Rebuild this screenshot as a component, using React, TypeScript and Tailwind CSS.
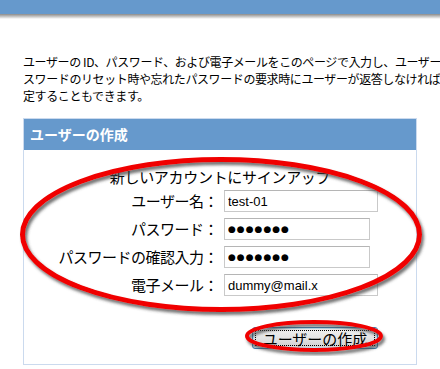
import React from "react";

// 日本語は Noto Sans CJK JP、入力欄の英数字は Arial 幅の Liberation Sans
const JP = "font-['Noto_Sans_CJK_JP',sans-serif]";
const LATIN = "font-['Liberation_Sans','Noto_Sans_CJK_JP',sans-serif]";

const rows = [
  { label: "ユーザー名：", value: "test-01", w: "w-[154px]" },
  { label: "パスワード：", value: "●●●●●●●", w: "w-[146px]", secret: true },
  { label: "パスワードの確認入力：", value: "●●●●●●●", w: "w-[146px]", secret: true },
  { label: "電子メール：", value: "dummy@mail.x", w: "w-[154px]" },
];

function Field({ value, w, secret }: { value: string; w: string; secret?: boolean }) {
  return (
    <input
      readOnly
      value={value}
      className={`block ${w} h-[22px] border border-[#c9c9c9] border-t-[#b5b5b5] bg-white px-[3px] text-black outline-none ${
        secret ? "font-['DejaVu_Sans',sans-serif] text-[9px] tracking-[1px]" : `${LATIN} text-[13px]`
      }`}
    />
  );
}

export default function App() {
  return (
    <div className={`relative h-[369px] w-[440px] overflow-hidden bg-white text-black ${JP}`}>
      <div className="h-[14px] bg-[#6699cc]" />
      <div className="h-[5px] bg-gradient-to-b from-[#8c8c8c] to-white" />

      <div className="ml-[23px] mt-[34px] whitespace-nowrap text-[12px] leading-[17px] tracking-[-0.4px]">
        <div>ユーザーの ID、パスワード、および電子メールをこのページで入力し、ユーザーを追加します。パ</div>
        <div>スワードのリセット時や忘れたパスワードの要求時にユーザーが返答しなければならない秘密の質問と答えを設</div>
        <div>定することもできます。</div>
      </div>

      <div className="ml-[23px] mt-[14px] w-[394px] border border-[#cbdaee]">
        <div className="flex h-[31px] items-center bg-[#6699cc] px-[6px] text-[14px] font-bold text-white">
          ユーザーの作成
        </div>
        <div className="pb-[15px] pt-[17px]">
          <div className="text-center text-[15px] leading-[19px] tracking-[-0.3px]">新しいアカウントにサインアップ</div>
          <div className="mt-[4px] grid grid-cols-[194px_auto] items-center gap-x-[6px] gap-y-[6px]">
            {rows.map((r) => (
              <React.Fragment key={r.label}>
                <div className="whitespace-nowrap text-right text-[15px] leading-[22px] tracking-[-0.5px]">
                  {r.label}
                </div>
                <Field value={r.value} w={r.w} secret={r.secret} />
              </React.Fragment>
            ))}
          </div>
          <div className="mt-[31px] flex justify-end pr-[38px]">
            <button className="h-[22px] w-[126px] rounded-[3px] border border-[#3c7fb1] bg-gradient-to-b from-[#f2f2f2] via-[#e4e4e4] to-[#cfcfcf] p-[2px] shadow-[inset_0_0_0_1px_#bfe6f5]">
              <span className="flex h-full items-center justify-center border border-dotted border-black text-[15px] leading-none">
                ユーザーの作成
              </span>
            </button>
          </div>
        </div>
      </div>

      <svg className="pointer-events-none absolute left-0 top-0" width="440" height="369">
        <defs>
          <filter id="sh" x="-10%" y="-20%" width="120%" height="140%">
            <feDropShadow dx="2" dy="3" stdDeviation="1.5" floodColor="#444" floodOpacity="0.75" />
          </filter>
        </defs>
        <ellipse cx="221" cy="234.5" rx="198.5" ry="75" fill="none" stroke="#f00000" strokeWidth="5" filter="url(#sh)" />
        <ellipse cx="314" cy="336" rx="67" ry="14" fill="none" stroke="#f00000" strokeWidth="4" filter="url(#sh)" />
      </svg>
    </div>
  );
}
